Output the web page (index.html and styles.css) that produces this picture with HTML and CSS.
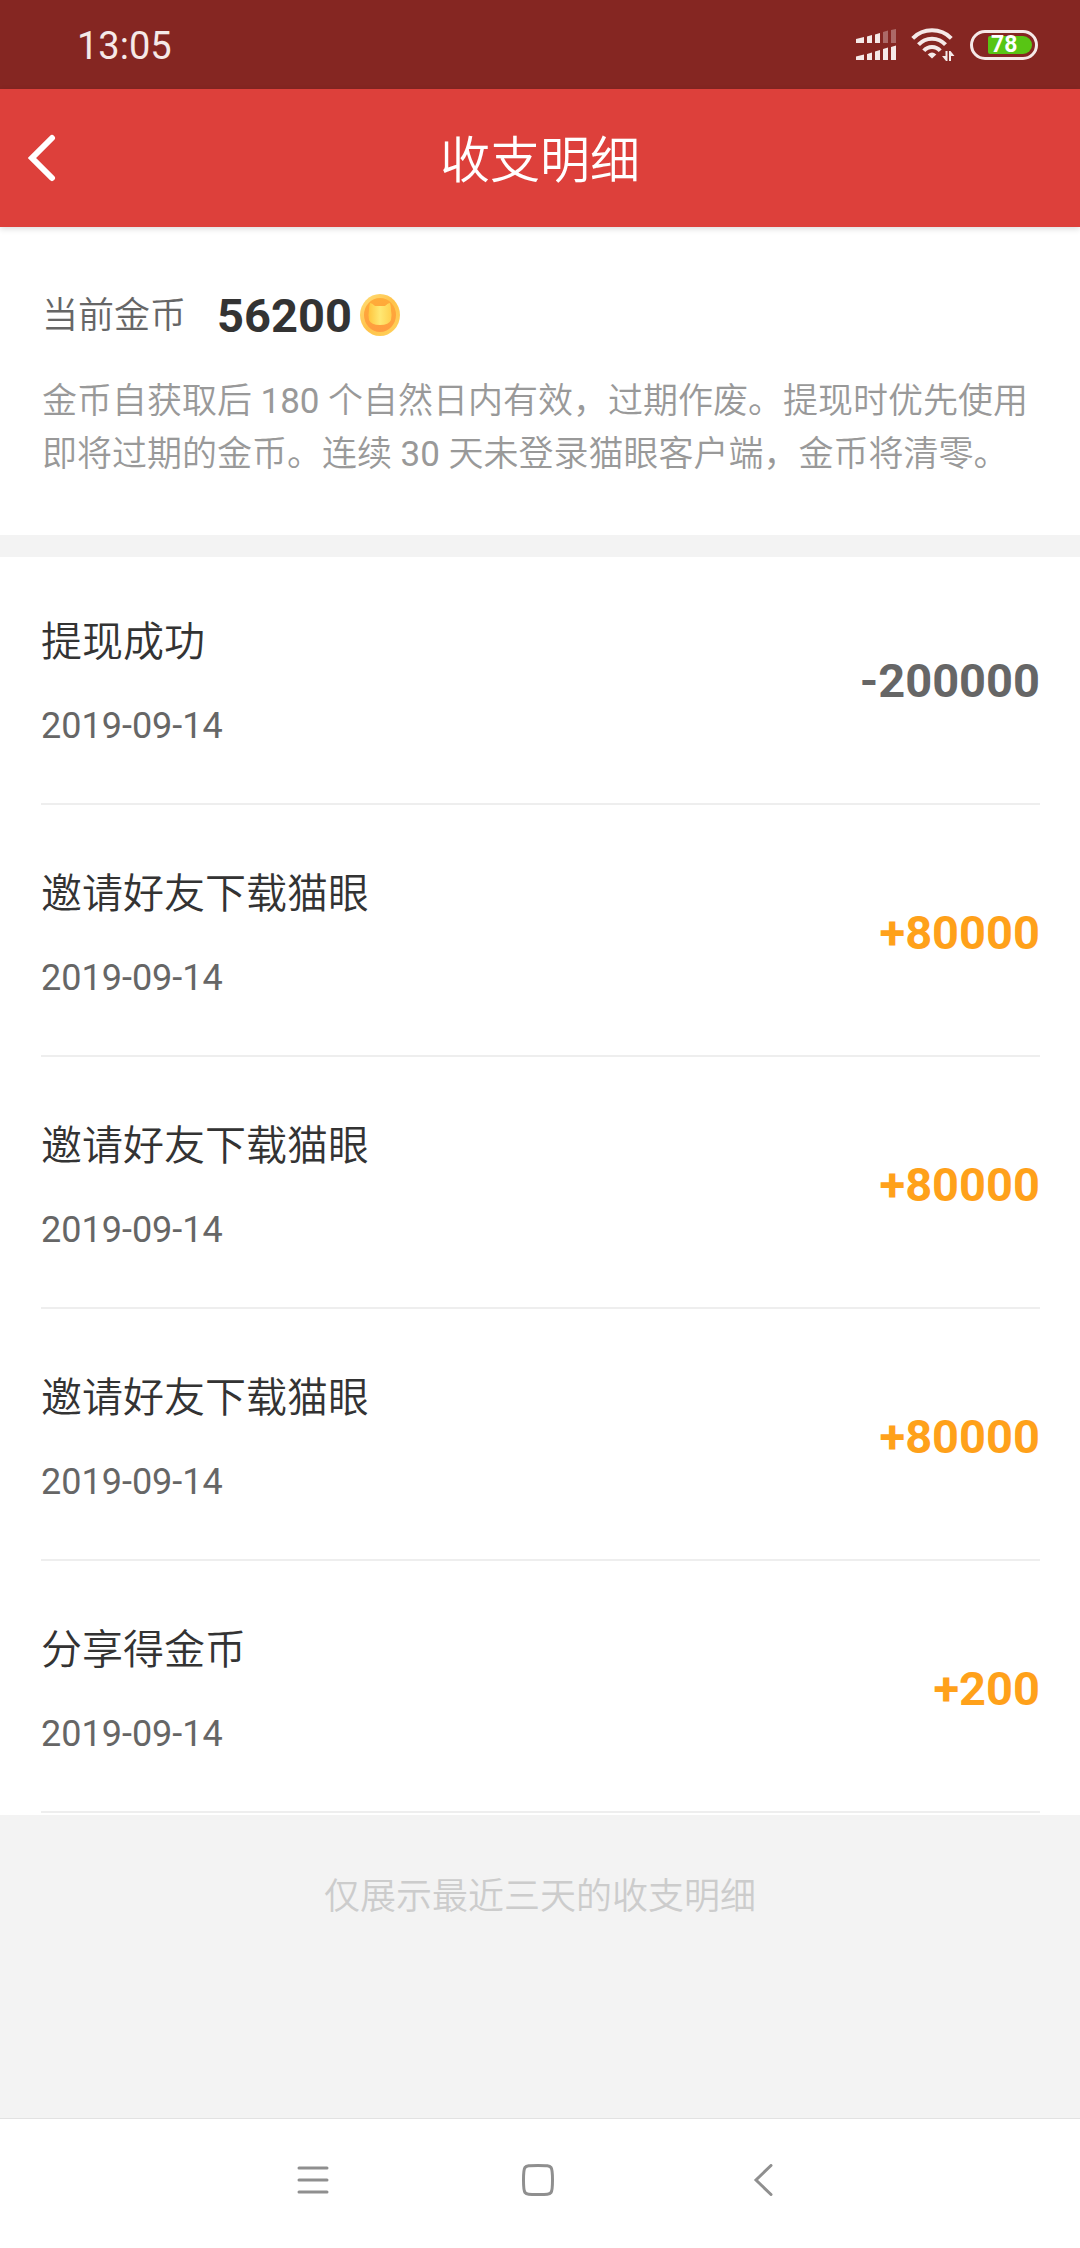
FILE: index.html
```html
<!DOCTYPE html>
<html lang="zh-CN">
<head>
<meta charset="utf-8">
<meta name="viewport" content="width=device-width, initial-scale=1">
<title>收支明细</title>
<link rel="stylesheet" href="styles.css">
</head>
<body>
<div class="screen">
  <div class="status-bar">
    <time class="clock">13:05</time>
    <div class="status-icons">
      <svg class="signal" viewBox="0 0 40 31" aria-hidden="true">
        <path d="M0 10l8-2v6H0zM11 7.500l5-1.500v8h-5zM19 5.500l5-1.500v10h-5z"/>
        <path class="dim" d="M27 3l5-1.500V14h-5zM35 1l5-1v14h-5z"/>
        <path d="M0 27.500l8-2V31H0zM11 25l5-1.500V31h-5zM19 22.500l5-1.500v10h-5zM27 20l5-1.500V31h-5zM35 18l5-1.500V31h-5z"/>
      </svg>
      <svg class="wifi" viewBox="0 0 46 36" aria-hidden="true">
        <g class="waves">
          <path d="M2.700 11.300a27.300 27.300 0 0 1 38.600 0"/>
          <path d="M8.500 17.700a18.200 18.200 0 0 1 27 0"/>
          <path d="M13.800 23.800a10.700 10.700 0 0 1 16.400 0"/>
        </g>
        <path d="M17.700 27.500q4.300-4 8.600 0L22 31.500z"/>
        <path d="M35.500 24h2v10h-1.500l-4-5h3.500zM39 34h2v-5h3.500l-4-5H39z"/>
      </svg>
      <div class="battery"><span class="battery-level">78</span></div>
    </div>
  </div>

  <header class="title-bar">
    <button class="back" type="button" aria-label="返回">
      <svg viewBox="0 0 28 48" aria-hidden="true"><path d="M24 4L4 24L24 44"/></svg>
    </button>
    <h1 class="title">收支明细</h1>
  </header>

  <main class="content">
    <section class="summary">
      <div class="balance">
        <span class="balance-label">当前金币</span>
        <strong class="balance-value">56200</strong>
        <svg class="coin" viewBox="0 0 40 42" aria-hidden="true">
          <defs>
            <linearGradient id="rim" x1="0" y1="0" x2="1" y2="1">
              <stop offset="0" stop-color="#ffe07a"/><stop offset=".5" stop-color="#ffc24a"/><stop offset="1" stop-color="#ffd35c"/>
            </linearGradient>
            <linearGradient id="face" x1="0" y1="0" x2="0" y2="1">
              <stop offset="0" stop-color="#ffac38"/><stop offset="1" stop-color="#ff9c40"/>
            </linearGradient>
            <linearGradient id="cat" x1="0" y1="0" x2="1" y2="0">
              <stop offset="0" stop-color="#ffc53d"/><stop offset=".5" stop-color="#ffe873"/><stop offset="1" stop-color="#ffd04e"/>
            </linearGradient>
          </defs>
          <ellipse cx="20" cy="21" rx="20" ry="21" fill="url(#rim)"/>
          <ellipse cx="20" cy="21" rx="16" ry="17" fill="url(#face)"/>
          <path d="M10 9Q12 9 15 12H25Q28 9 30 9Q31 12 31 16Q32 20 31 26Q29 31 20 31Q11 31 9 26Q8 20 9 16Q9 12 10 9z" fill="url(#cat)"/>
        </svg>
      </div>
      <p class="notice">金币自获取后 <span class="number">180</span> 个自然日内有效，过期作废。提现时优先使用即将过期的金币。连续 <span class="number">30</span> 天未登录猫眼客户端，金币将清零。</p>
    </section>

    <ul class="records">
      <li class="record">
        <div class="record-info"><span class="record-name">提现成功</span><time class="record-date">2019-09-14</time></div>
        <span class="amount">-200000</span>
      </li>
      <li class="record">
        <div class="record-info"><span class="record-name">邀请好友下载猫眼</span><time class="record-date">2019-09-14</time></div>
        <span class="amount income">+80000</span>
      </li>
      <li class="record">
        <div class="record-info"><span class="record-name">邀请好友下载猫眼</span><time class="record-date">2019-09-14</time></div>
        <span class="amount income">+80000</span>
      </li>
      <li class="record">
        <div class="record-info"><span class="record-name">邀请好友下载猫眼</span><time class="record-date">2019-09-14</time></div>
        <span class="amount income">+80000</span>
      </li>
      <li class="record">
        <div class="record-info"><span class="record-name">分享得金币</span><time class="record-date">2019-09-14</time></div>
        <span class="amount income">+200</span>
      </li>
    </ul>
    <p class="footnote">仅展示最近三天的收支明细</p>
  </main>

  <nav class="system-nav" aria-label="系统导航">
    <button class="nav-key" type="button" aria-label="最近任务">
      <svg viewBox="0 0 32 32" aria-hidden="true"><path d="M2 4h28M2 16h28M2 28h28"/></svg>
    </button>
    <button class="nav-key" type="button" aria-label="主屏幕">
      <svg viewBox="0 0 32 32" aria-hidden="true"><path d="M16 1.500C25 1.500 27.500 1.500 29 3.500S30.500 9 30.500 16S30.500 26.500 29 28.500S25 30.500 16 30.500S4.500 30.500 3 28.500S1.500 23 1.500 16S1.500 5.500 3 3.500S7 1.500 16 1.500z"/></svg>
    </button>
    <button class="nav-key" type="button" aria-label="返回上一页">
      <svg viewBox="0 0 32 32" aria-hidden="true"><path d="M24 1.500L9 16L24 30.500"/></svg>
    </button>
  </nav>
</div>
</body>
</html>
```
FILE: styles.css
```css
* { box-sizing: border-box; }

body {
  margin: 0;
  background: #f3f3f3;
  color: #333;
  font-family: Roboto, "Noto Sans CJK SC", sans-serif;
  font-weight: 350;
}

button {
  padding: 0;
  border: 0;
  background: none;
}

svg { display: block; fill: none; }

.screen {
  display: flex;
  flex-direction: column;
  min-height: 100vh;
}

.status-bar {
  display: flex;
  align-items: center;
  justify-content: space-between;
  height: 89px;
  padding: 0 42px 0 77px;
  background: #852622;
  color: #f5e9e8;
}

.clock {
  padding-top: 2px;
  font-size: 38px;
  font-weight: 400;
  line-height: 48px;
}

.status-icons {
  display: flex;
  align-items: center;
  gap: 14px;
}

.signal { width: 40px; height: 31px; fill: #f5e9e8; }
.dim { opacity: .35; }
.wifi { width: 46px; height: 36px; fill: #f5e9e8; }
.waves { fill: none; stroke: #f5e9e8; stroke-width: 4; }

.battery {
  display: flex;
  justify-content: flex-end;
  width: 68px;
  height: 30px;
  padding: 3px;
  border: 3px solid #f5e9e8;
  border-radius: 15px;
}

.battery-level {
  width: 44px;
  padding-left: 3px;
  border-radius: 2px 9px 9px 2px;
  background: #58c514;
  color: #fff;
  font-size: 23px;
  font-weight: 700;
  line-height: 18px;
}

.title-bar {
  display: grid;
  grid-template-columns: 84px 1fr 84px;
  align-items: center;
  height: 138px;
  background: #dd403b;
  color: #fff;
  box-shadow: 0 2px 6px rgba(0, 0, 0, .14);
  z-index: 1;
}

.back { padding-left: 28px; }
.back svg { width: 28px; height: 48px; stroke: #fff; stroke-width: 6; stroke-linecap: round; stroke-linejoin: miter; }

.title {
  margin: 0;
  padding-top: 6px;
  font-size: 50px;
  font-weight: 350;
  line-height: 72px;
  text-align: center;
}

.content { flex: 1; }

.summary {
  padding: 58px 40px 54px 42px;
  background: #fff;
}

.balance {
  display: flex;
  align-items: center;
  height: 60px;
}

.balance-label { margin-right: 31px; padding-bottom: 6px; color: #666; font-size: 36px; }
.balance-value { margin-right: 8px; font-size: 47px; font-weight: 700; }
.coin { width: 40px; height: 42px; }

.notice {
  margin: 30px 0 0;
  color: #999;
  font-size: 35px;
  line-height: 53px;
}

.number { font-weight: 400; }

.records {
  display: flex;
  flex-direction: column;
  gap: 65px;
  margin: 22px 0 0;
  padding: 61px 40px 2px 41px;
  background: #fff;
  list-style: none;
}

.record {
  display: flex;
  align-items: center;
  justify-content: space-between;
  padding-bottom: 53px;
  border-bottom: 2px solid #eee;
}

.record-info {
  display: flex;
  flex-direction: column;
  gap: 36px;
  line-height: 48px;
}

.record-name { font-size: 41px; }
.record-date { color: #666; font-size: 36px; font-weight: 400; }

.amount { padding-bottom: 6px; color: #666; font-size: 47px; font-weight: 700; line-height: 48px; }
.income { color: #ffa11a; }

.footnote {
  margin: 56px 0;
  color: #ccc;
  font-size: 36px;
  line-height: 53px;
  text-align: center;
}

.system-nav {
  display: flex;
  justify-content: center;
  height: 130px;
  padding-right: 5px;
  border-top: 1px solid #e2e2e2;
  background: #fff;
}

.nav-key {
  display: flex;
  align-items: center;
  justify-content: center;
  width: 225px;
  padding-bottom: 8px;
}

.nav-key svg {
  width: 32px;
  height: 32px;
  stroke: #8f8f8f;
  stroke-width: 3;
  stroke-linecap: round;
}
```
